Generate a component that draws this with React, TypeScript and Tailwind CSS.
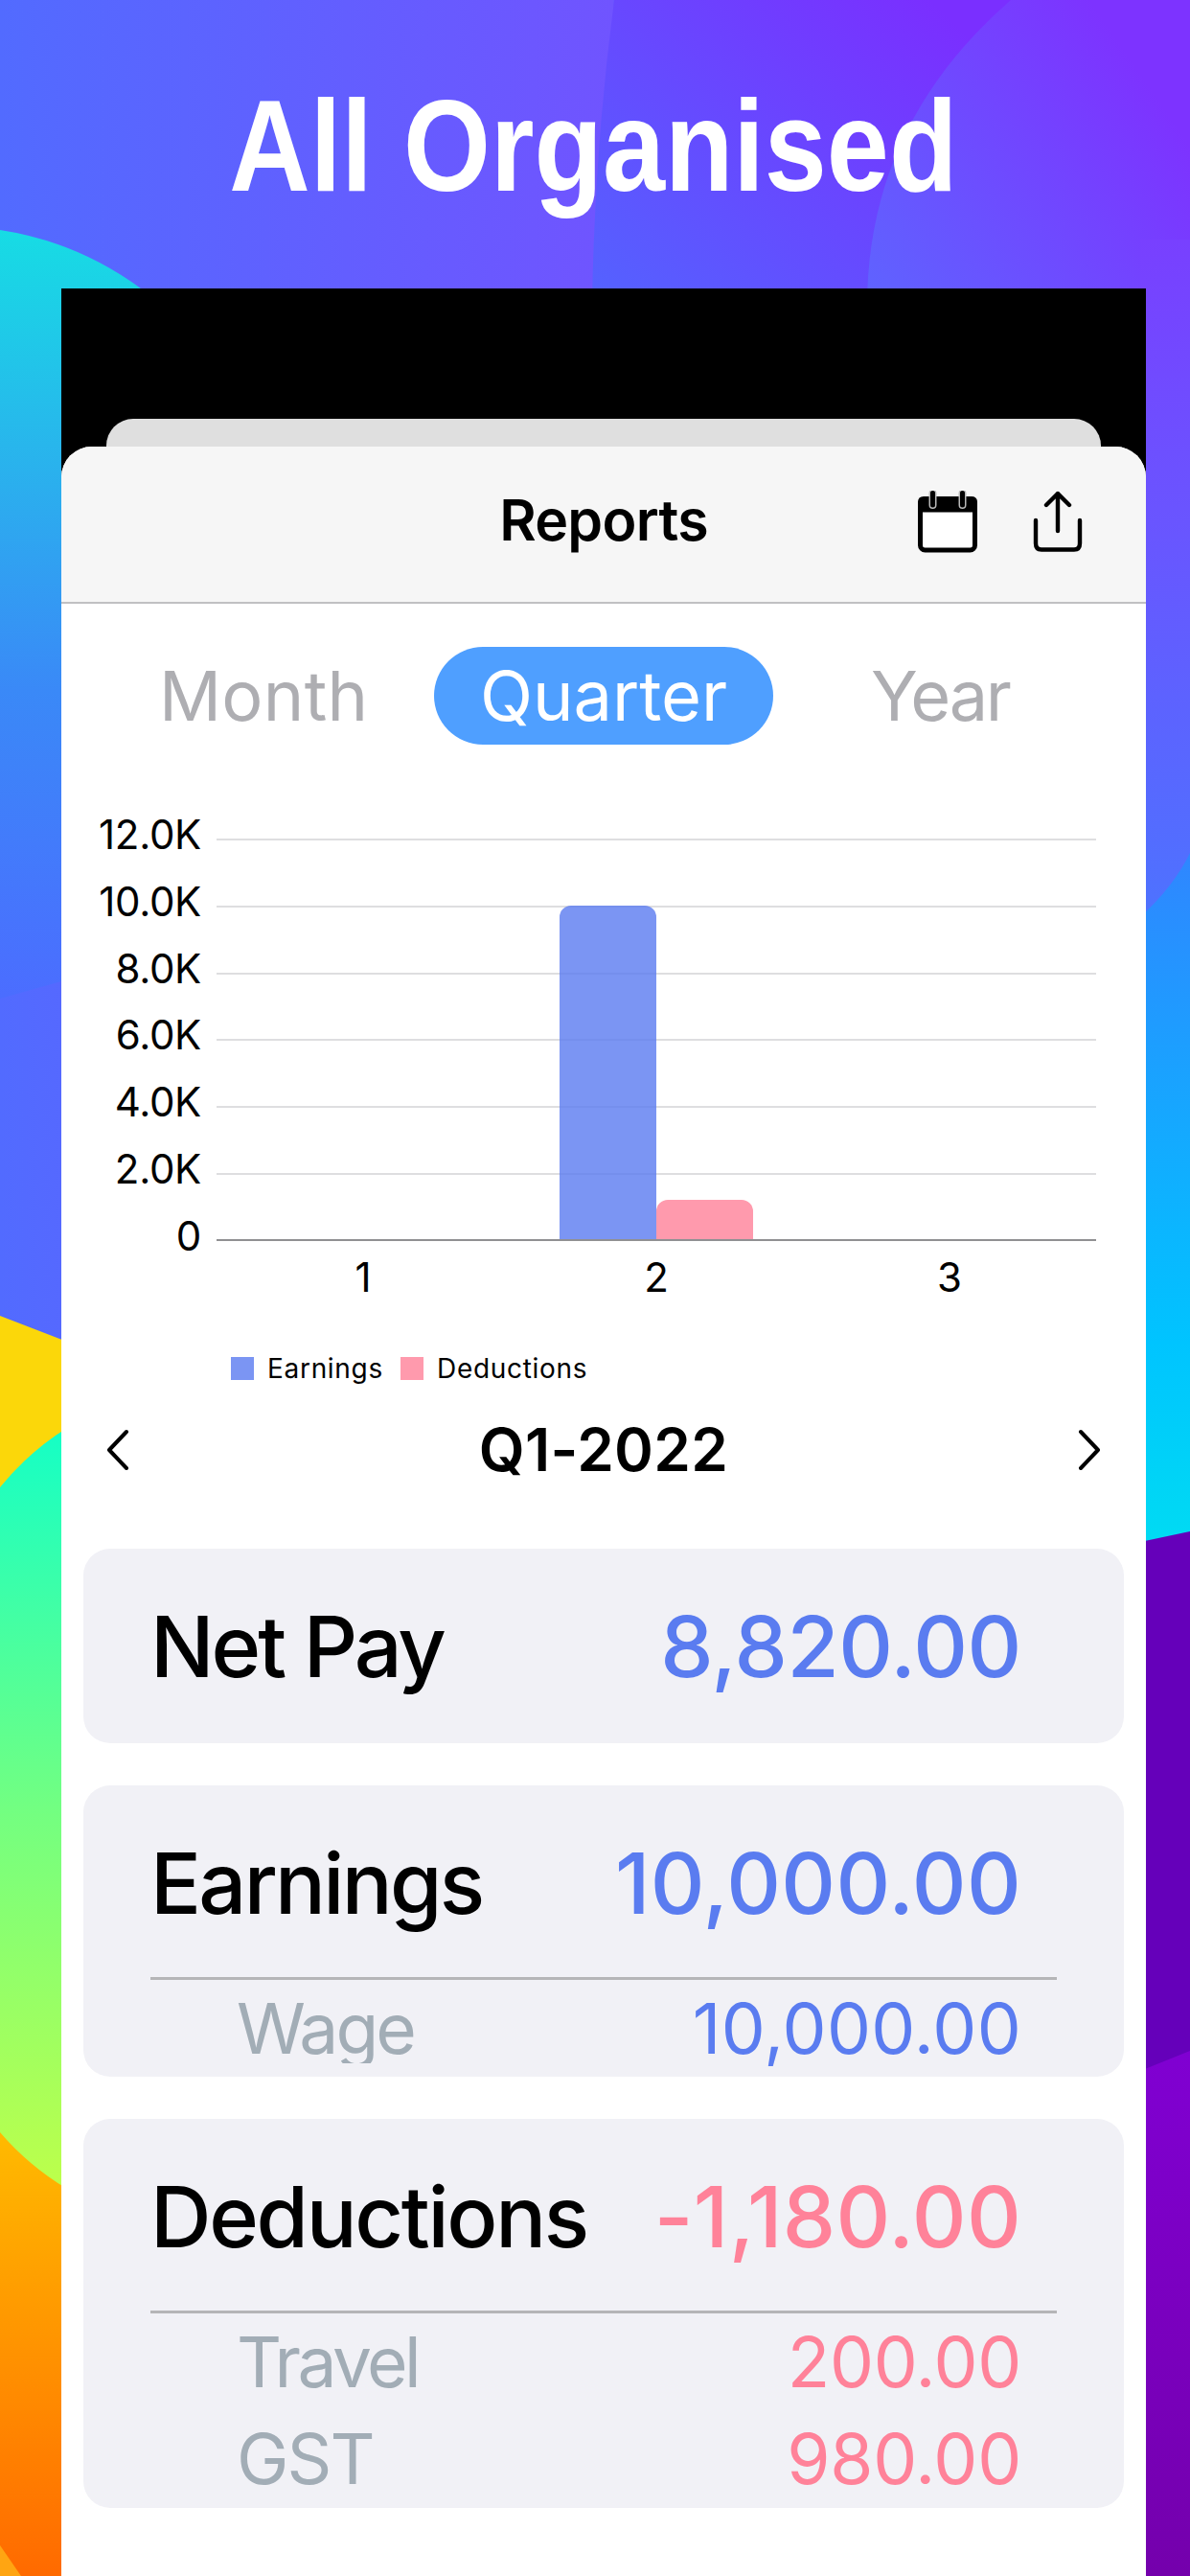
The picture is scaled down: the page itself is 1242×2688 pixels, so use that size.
import React from 'react';

interface ReportRow {
  label: string;
  value: string;
  color: string;
  labelClass?: string;
  valueClass?: string;
}

const chartTicks = ['12.0K', '10.0K', '8.0K', '6.0K', '4.0K', '2.0K', '0'];

const chartMax = 12000;

const chartData = [
  { label: '1', earnings: 0, deductions: 0 },
  { label: '2', earnings: 10000, deductions: 1180 },
  { label: '3', earnings: 0, deductions: 0 },
];

const Backdrop: React.FC = () => (
  <svg className="absolute inset-0" width="1242" height="2688" viewBox="0 0 1242 2688">
    <defs>
      <linearGradient id="base" x1="0" y1="0" x2="1" y2="0">
        <stop offset="0" stopColor="#526bff" />
        <stop offset="1" stopColor="#7054ff" />
      </linearGradient>
      <linearGradient id="middle" gradientUnits="userSpaceOnUse" x1="640" y1="330" x2="960" y2="-10">
        <stop offset="0" stopColor="#5462ff" />
        <stop offset="1" stopColor="#7a2fff" />
      </linearGradient>
      <linearGradient id="right" gradientUnits="userSpaceOnUse" x1="900" y1="340" x2="1220" y2="120">
        <stop offset="0" stopColor="#5d66ff" />
        <stop offset="1" stopColor="#7d33ff" />
      </linearGradient>
      <linearGradient id="rightEdge" gradientUnits="userSpaceOnUse" x1="1190" y1="250" x2="1190" y2="950">
        <stop offset="0" stopColor="#7840ff" />
        <stop offset="0.4" stopColor="#6a54ff" />
        <stop offset="1" stopColor="#4e72ff" />
      </linearGradient>
      <linearGradient id="teal" gradientUnits="userSpaceOnUse" x1="0" y1="240" x2="0" y2="1040">
        <stop offset="0" stopColor="#17dce4" />
        <stop offset="0.28" stopColor="#28b6ec" />
        <stop offset="0.6" stopColor="#3a89f7" />
        <stop offset="1" stopColor="#4b6dff" />
      </linearGradient>
      <linearGradient id="green" x1="0" y1="0" x2="0" y2="1">
        <stop offset="0" stopColor="#14ffc6" />
        <stop offset="0.5" stopColor="#74ff80" />
        <stop offset="1" stopColor="#c0ff48" />
      </linearGradient>
      <linearGradient id="orange" x1="0" y1="0" x2="0" y2="1">
        <stop offset="0" stopColor="#ffba00" />
        <stop offset="1" stopColor="#ff6a00" />
      </linearGradient>
      <linearGradient id="cyan" x1="0" y1="0" x2="0" y2="1">
        <stop offset="0" stopColor="#2f86ff" />
        <stop offset="0.7" stopColor="#00c4ff" />
        <stop offset="1" stopColor="#00dcf2" />
      </linearGradient>
      <linearGradient id="violet" x1="0" y1="0" x2="0" y2="1">
        <stop offset="0" stopColor="#8000d2" />
        <stop offset="1" stopColor="#7400ac" />
      </linearGradient>
    </defs>
    <rect width="640" height="1400" fill="url(#base)" />
    <path d="M641 0 Q620 160 618 320 H1242 V0 Z" fill="url(#middle)" />
    <path d="M1055 0 Q905 130 905 320 H1242 V0 Z" fill="url(#right)" />
    <path d="M1190 250 H1242 V960 H1190 Z" fill="url(#rightEdge)" />
    <path d="M0 240 Q80 252 147 301 L147 1010 L64 1024 L0 1042 Z" fill="url(#teal)" />
    <path d="M0 1373 L70 1400 V1600 H0 Z" fill="#fbd70a" />
    <path d="M0 1552 Q30 1515 70 1490 V2300 H0 Z" fill="url(#green)" />
    <path d="M0 2225 Q30 2260 70 2284 V2688 H0 Z" fill="url(#orange)" />
    <path d="M0 2656 L22 2688 H0 Z" fill="#ffa512" />
    <path d="M1190 957 Q1225 925 1242 890 V1620 H1190 Z" fill="url(#cyan)" />
    <path d="M1190 1609 L1242 1598 V2200 H1190 Z" fill="#6500ba" />
    <path d="M1190 2161 L1242 2140 V2688 H1190 Z" fill="url(#violet)" />
  </svg>
);

const CalendarIcon: React.FC = () => (
  <svg width="64" height="66" viewBox="0 0 64 66" fill="none">
    <rect x="3.5" y="9" width="57" height="53" rx="5" fill="white" stroke="black" strokeWidth="5" />
    <path d="M1 22.5 V12 Q1 6 7 6 H57 Q63 6 63 12 V22.5 Z" fill="black" />
    <path d="M16.5 3 V15 M47.5 3 V15" stroke="#b8b8b8" strokeWidth="8" strokeLinecap="round" />
    <path d="M16.5 2.5 V15 M47.5 2.5 V15" stroke="black" strokeWidth="5" strokeLinecap="round" />
  </svg>
);

const ShareIcon: React.FC = () => (
  <svg width="54" height="66" viewBox="0 0 54 66" fill="none" stroke="black" strokeWidth="4.4" strokeLinecap="round" strokeLinejoin="round">
    <path d="M27 42 V3 M15 15 L27 3 L39 15" />
    <path d="M4 31 V55 Q4 61.5 10 61.5 H44 Q50 61.5 50 55 V31" />
  </svg>
);

const Chart: React.FC = () => (
  <div className="mt-[74px] pr-[52px] pl-[33px]">
    <div className="flex">
      <div className="-mt-[15px] flex w-[113px] shrink-0 flex-col text-right text-[42px] leading-[70px] tracking-[-0.3px]">
        {chartTicks.map((tick) => (
          <span key={tick} className="h-[69.8px]">{tick}</span>
        ))}
      </div>
      <div className="relative mt-6 ml-4 h-[420px] grow">
        {chartTicks.slice(0, -1).map((tick) => (
          <div key={tick} className="h-[69.8px] border-t-2 border-[#dedee0]"></div>
        ))}
        <div className="absolute inset-0 flex border-b-2 border-[#909092]">
          {chartData.map((item) => (
            <div key={item.label} className="flex flex-1 items-end justify-center">
              <div
                className="w-[101px] rounded-t-xl bg-[#5a7af0]/80"
                style={{ height: `${(item.earnings / chartMax) * 100}%` }}
              ></div>
              <div
                className="w-[101px] rounded-t-xl bg-[#ff9aad]"
                style={{ height: `${(item.deductions / chartMax) * 100}%` }}
              ></div>
            </div>
          ))}
        </div>
      </div>
    </div>
    <div className="-mt-[17px] ml-[129px] flex text-center text-[42px] leading-[50px]">
      {chartData.map((item) => (
        <span key={item.label} className="flex-1">{item.label}</span>
      ))}
    </div>
    <div className="mt-[52px] ml-36 flex items-center text-[28px] leading-[36px]">
      <div className="h-6 w-6 bg-[#7b95f3]"></div>
      <span className="ml-[14px] w-[139px] tracking-[0.7px]">Earnings</span>
      <div className="h-6 w-6 bg-[#ff9aad]"></div>
      <span className="ml-[14px] tracking-[0.7px]">Deductions</span>
    </div>
  </div>
);

const SummaryTitle: React.FC<ReportRow> = ({ label, value, color, labelClass, valueClass }) => (
  <div className="flex h-[203px] items-center justify-between pt-[2px] pr-[107px] pl-[70px] text-[88px] font-medium">
    <span className={labelClass}>{label}</span>
    <span className={`${color} ${valueClass}`}>{value}</span>
  </div>
);

const DetailRow: React.FC<ReportRow> = ({ label, value, color, labelClass, valueClass }) => (
  <div className="flex h-[101px] items-center justify-between pr-[107px] pl-[160px] text-[73px] leading-[73px]">
    <span className={`text-[#a2adb6] ${labelClass}`}>{label}</span>
    <span className={`${color} ${valueClass}`}>{value}</span>
  </div>
);

export default function App() {
  return (
    <div className="relative h-[2688px] w-[1242px] overflow-hidden bg-[#6a55ff] font-['Inter',sans-serif] text-black">
      <Backdrop />
      <div className="relative flex h-full flex-col">
        <h1 className="h-[301px] scale-x-[0.866] pt-[75px] pr-[4px] text-center font-['Liberation_Sans',sans-serif] text-[135px] leading-[155px] font-bold text-white">
          All Organised
        </h1>
        <div className="ml-16 flex w-[1132px] grow flex-col bg-black">
          <div className="mx-[47px] mt-[136px] h-[29px] rounded-t-[28px] bg-[#dfdfdf]"></div>
          <div className="grow overflow-hidden rounded-t-[32px] bg-white">
            <header className="relative flex h-[164px] items-center justify-center border-b-2 border-[#c0c0c2] bg-[#f6f6f6] pb-[7px]">
              <h2 className="text-[59px] font-semibold tracking-[-0.7px]">Reports</h2>
              <div className="absolute top-[46px] right-[65px] flex gap-14">
                <CalendarIcon />
                <ShareIcon />
              </div>
            </header>

            <nav className="mt-[45px] flex h-[102px] items-center text-[72px] leading-[88px] text-[#aeaeb2]">
              <span className="w-[389px] pl-[102px] tracking-[0.3px]">Month</span>
              <span className="flex h-full w-[354px] items-center justify-center rounded-full bg-[#4f9fff] text-white">
                Quarter
              </span>
              <span className="ml-[102px] tracking-[-2.2px]">Year</span>
            </nav>

            <Chart />

            <div className="mt-[30px] flex items-center justify-between px-[46px]">
              <svg width="26" height="44" viewBox="0 0 26 44" fill="none" stroke="black" strokeWidth="4" strokeLinecap="round" strokeLinejoin="round">
                <path d="M22 3 L4 22 L22 41" />
              </svg>
              <span className="text-[62px] leading-[74px] font-semibold tracking-[0.3px]">Q1-2022</span>
              <svg width="26" height="44" viewBox="0 0 26 44" fill="none" stroke="black" strokeWidth="4" strokeLinecap="round" strokeLinejoin="round">
                <path d="M4 3 L22 22 L4 41" />
              </svg>
            </div>

            <div className="mt-[66px] flex flex-col gap-11 px-[23px]">
              <section className="rounded-[28px] bg-[#f1f1f6]">
                <SummaryTitle
                  label="Net Pay"
                  value="8,820.00"
                  color="text-[#5a7cf0]"
                  labelClass="tracking-[-3px]"
                  valueClass="tracking-[-0.4px]"
                />
              </section>
              <section className="h-[304px] rounded-[28px] bg-[#f1f1f6]">
                <SummaryTitle
                  label="Earnings"
                  value="10,000.00"
                  color="text-[#5a7cf0]"
                  labelClass="tracking-[-2.7px]"
                  valueClass="tracking-[0.3px]"
                />
                <div className="mx-[70px] -mt-[3px] h-[3px] bg-[#b5b5b7]"></div>
                <DetailRow
                  label="Wage"
                  value="10,000.00"
                  color="text-[#5a7cf0]"
                  labelClass="overflow-hidden tracking-[-2.9px]"
                  valueClass="tracking-[0.3px]"
                />
              </section>
              <section className="h-[406px] rounded-[28px] bg-[#f1f1f6]">
                <SummaryTitle
                  label="Deductions"
                  value="-1,180.00"
                  color="text-[#ff8299]"
                  labelClass="tracking-[-2.3px]"
                  valueClass="tracking-[0.3px]"
                />
                <div className="mx-[70px] -mt-[3px] h-[3px] bg-[#b5b5b7]"></div>
                <DetailRow
                  label="Travel"
                  value="200.00"
                  color="text-[#ff8299]"
                  labelClass="tracking-[-3.5px]"
                  valueClass="tracking-[-0.3px]"
                />
                <DetailRow
                  label="GST"
                  value="980.00"
                  color="text-[#ff8299]"
                  labelClass="tracking-[-1.9px]"
                  valueClass="tracking-[-0.2px]"
                />
              </section>
            </div>
          </div>
        </div>
      </div>
    </div>
  );
}
